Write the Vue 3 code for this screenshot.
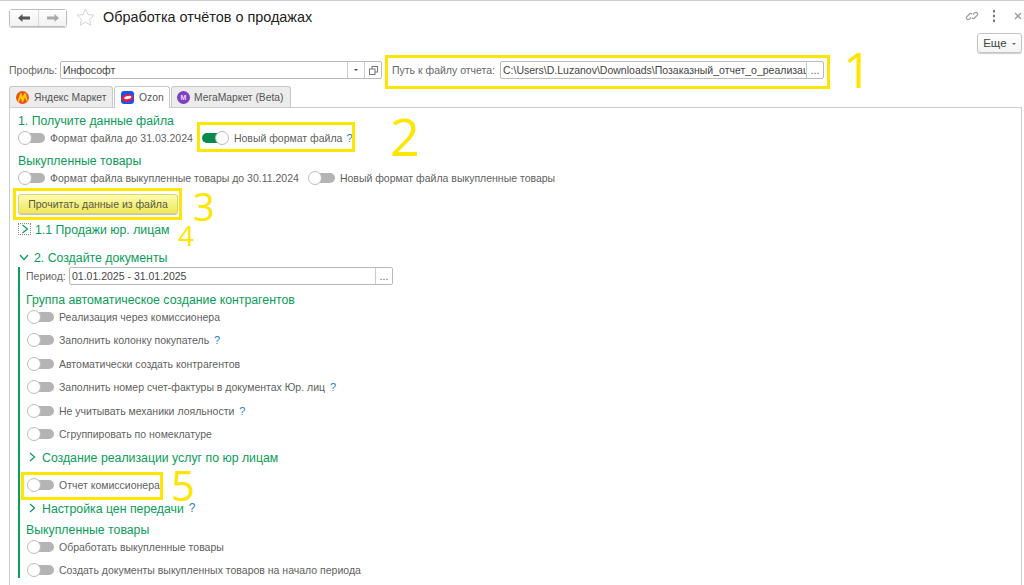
<script setup>
const groupOne = [
  { label: 'Реализация через комиссионера' },
  { label: 'Заполнить колонку покупатель', help: true },
  { label: 'Автоматически создать контрагентов' },
  { label: 'Заполнить номер счет-фактуры в документах Юр. лиц', help: true },
  { label: 'Не учитывать механики лояльности', help: true },
  { label: 'Сгруппировать по номеклатуре' },
]
const marks = [
  { text: '1', cls: 'm1' },
  { text: '2', cls: 'm2' },
  { text: '3', cls: 'm3' },
  { text: '4', cls: 'm4' },
  { text: '5', cls: 'm5' },
]
const boxes = ['b1', 'b2', 'b3', 'b5']
</script>

<template>
  <div class="page">
    <header class="head">
      <div class="nav">
        <button class="nav-btn">
          <svg width="14" height="10" viewBox="0 0 14 10"><path d="M1 5l4.500-4v2.600H13v2.800H5.500V9z" fill="#555" /></svg>
        </button>
        <button class="nav-btn">
          <svg width="14" height="10" viewBox="0 0 14 10"><path d="M13 5L8.500 1v2.600H1v2.800h7.500V9z" fill="#aaa" /></svg>
        </button>
      </div>
      <svg class="star" width="19" height="18" viewBox="0 0 19 18"><path d="M9.500 1l2.500 5.500 6 .7-4.400 4.100 1.200 5.900-5.300-3-5.300 3 1.200-5.900L1 7.200l6-.7z" fill="none" stroke="#d4d4d4" /></svg>
      <h1 class="title">Обработка отчётов о продажах</h1>
      <div class="head-icons">
        <svg width="14" height="14" viewBox="0 0 14 14" fill="none" stroke="#999" stroke-width="1.200"><path d="M6 8.500l-1.800 1.800a1.800 1.800 0 0 1-2.500-2.500L4.500 5a1.800 1.800 0 0 1 2.500 0" /><path d="M8 5.500l1.800-1.800a1.800 1.800 0 0 1 2.500 2.500L9.500 9a1.800 1.800 0 0 1-2.500 0" /></svg>
        <svg class="dots" width="4" height="12" viewBox="0 0 4 12"><path d="M1 0h2v2.500H1zM1 4.700h2v2.500H1zM1 9.400h2v2.500H1z" fill="#777" /></svg>
        <svg class="close" width="8" height="8" viewBox="0 0 8 8"><path d="M1 1l6 6M7 1l-6 6" stroke="#999" stroke-width="1.300" /></svg>
      </div>
    </header>

    <div class="more-row">
      <button class="more">Еще <i class="caret"></i></button>
    </div>

    <div class="fields">
      <label class="lbl profile-lbl">Профиль:</label>
      <div class="input profile">
        <span class="val">Инфософт</span>
        <span class="addon"><i class="caret dark"></i></span>
        <span class="addon">
          <svg width="9" height="9" viewBox="0 0 9 9" fill="#fff" stroke="#777"><rect x="3" y=".5" width="5.500" height="5.500" /><rect x=".5" y="3" width="5.500" height="5.500" /></svg>
        </span>
      </div>
      <label class="lbl path-lbl">Путь к файлу отчета:</label>
      <div class="input path">
        <span class="val clip">C:\Users\D.Luzanov\Downloads\Позаказный_отчет_о_реализац</span>
        <span class="addon">...</span>
      </div>
    </div>

    <nav class="tabs">
      <div class="tab t1">
        <svg class="tab-ico" width="13" height="13" viewBox="0 0 13 13"><circle cx="6.500" cy="6.500" r="6.500" fill="#f0501e" /><path d="M1.500 10.500L4.200 2.500c.6-.7 1.200-.5 1.500.2l.9 3L8.200 2.400c.6-.8 1.400-.6 1.700.2l1.800 7.100c-.4.700-1 .7-1.300.1L8.900 6.500 7.200 10.700c-.5.600-1 .6-1.300 0L4.700 6.800 3 10.800c-.6.500-1.200.3-1.500-.3z" fill="#ffcc00" /></svg>
        Яндекс Маркет
      </div>
      <div class="tab active t2">
        <svg class="tab-ico" width="13" height="13" viewBox="0 0 13 13"><rect width="13" height="13" rx="3" fill="#1457f0" /><ellipse cx="6.500" cy="7" rx="5.800" ry="3.800" transform="rotate(-12 6.500 7)" fill="#f1173f" /><ellipse cx="6.800" cy="6.500" rx="3.600" ry="1.600" transform="rotate(-12 6.800 6.500)" fill="#fff" /></svg>
        Ozon
      </div>
      <div class="tab t3">
        <span class="mega">M</span>
        МегаМаркет (Beta)
      </div>
    </nav>

    <main class="panel">
      <h2 class="sec">1. Получите данные файла</h2>
      <div class="row">
        <span class="tg"></span><span class="txt">Формат файла до 31.03.2024</span>
        <span class="tg on second"></span><span class="txt">Новый формат файла</span><b class="help near">?</b>
      </div>
      <h2 class="sec s2">Выкупленные товары</h2>
      <div class="row r2">
        <span class="tg"></span><span class="txt">Формат файла выкупленные товары до 30.11.2024</span>
        <span class="tg second"></span><span class="txt">Новый формат файла выкупленные товары</span>
      </div>
      <button class="read">Прочитать данные из файла</button>
      <div class="sec-row sub">
        <span class="dotted"><svg width="8" height="10" viewBox="0 0 8 10"><path d="M1.500 1l5 4-5 4" fill="none" stroke="#0a9a58" stroke-width="1.200" /></svg></span>
        <h2 class="sec flat">1.1 Продажи юр. лицам</h2>
      </div>
      <div class="sec-row doc">
        <svg class="chev-down" width="10" height="7" viewBox="0 0 10 7"><path d="M1 1l4 4.500L9 1" fill="none" stroke="#0a9a58" stroke-width="1.200" /></svg>
        <h2 class="sec flat">2. Создайте документы</h2>
      </div>

      <section class="green">
        <div class="period">
          <label class="lbl period-lbl">Период:</label>
          <div class="input period-in">
            <span class="val">01.01.2025 - 31.01.2025</span>
            <span class="addon">...</span>
          </div>
        </div>
        <h2 class="sec s3">Группа автоматическое создание контрагентов</h2>
        <div v-for="item in groupOne" :key="item.label" class="row step">
          <span class="tg inner"></span><span class="txt in">{{ item.label }}</span><b v-if="item.help" class="help">?</b>
        </div>
        <div class="sec-row creation">
          <svg class="chev" width="7" height="10" viewBox="0 0 7 10"><path d="M1 1l4.500 4L1 9" fill="none" stroke="#0a9a58" stroke-width="1.200" /></svg>
          <h2 class="sec flat">Создание реализации услуг по юр лицам</h2>
        </div>
        <div class="row commission">
          <span class="tg inner"></span><span class="txt in">Отчет комиссионера</span>
        </div>
        <div class="sec-row prices">
          <svg class="chev" width="7" height="10" viewBox="0 0 7 10"><path d="M1 1l4.500 4L1 9" fill="none" stroke="#0a9a58" stroke-width="1.200" /></svg>
          <h2 class="sec flat">Настройка цен передачи</h2><b class="help big">?</b>
        </div>
        <h2 class="sec s4">Выкупленные товары</h2>
        <div class="row">
          <span class="tg inner"></span><span class="txt in">Обработать выкупленные товары</span>
        </div>
        <div class="row step">
          <span class="tg inner"></span><span class="txt in">Создать документы выкупленных товаров на начало периода</span>
        </div>
      </section>
    </main>

    <div v-for="b in boxes" :key="b" class="hl" :class="b"></div>
    <span v-for="m in marks" :key="m.text" class="mark" :class="m.cls">{{ m.text }}</span>
  </div>
</template>

<style>
html, body { margin: 0; background: #fff; }
</style>

<style scoped>
.page {
  position: relative;
  width: 1024px;
  height: 585px;
  overflow: hidden;
  background: #fff;
  font-family: "Liberation Sans", Arial, sans-serif;
  font-size: 10.500px;
  color: #5f5f5f;
  border-top: 1px solid #ccc;
  box-sizing: border-box;
}
button { font-family: inherit; padding: 0; cursor: default; }
h1, h2 { margin: 0; font-weight: 400; }

.head { display: flex; align-items: center; height: 32px; padding: 0 2px 0 9px; box-sizing: border-box; }
.nav { display: flex; margin-top: 1px; border: 1px solid #bdbdbd; border-radius: 3px; box-shadow: 0 1px 1px #ccc; }
.nav-btn { display: flex; align-items: center; justify-content: center; width: 28px; height: 16px; border: 0; background: linear-gradient(#fff, #f1f1f1); }
.nav-btn + .nav-btn { border-left: 1px solid #d8d8d8; }
.star { margin-left: 9px; }
.title { margin-left: 8px; font-size: 14.400px; color: #222; line-height: 18px; }
.head-icons { margin-left: auto; margin-bottom: 2px; display: flex; align-items: center; }
.dots { margin-left: 13px; }
.close { margin-left: 18px; }

.more-row { display: flex; justify-content: flex-end; padding-right: 2px; }
.more {
  width: 45px; height: 20px;
  border: 1px solid #c4c4c4; border-radius: 3px;
  background: linear-gradient(#fff, #f3f3f3);
  box-shadow: 0 1px 1px #ccc;
  color: #444; font-size: 11.500px;
}
.caret { display: inline-block; width: 0; height: 0; margin-left: 2px; vertical-align: 2px; border: 2.500px solid transparent; border-top-color: #666; border-bottom: 0; }
.caret.dark { border-top-color: #444; margin: 0; vertical-align: middle; }

.fields { display: flex; align-items: center; height: 18px; margin-top: 8px; padding-left: 9px; }
.lbl { color: #666; white-space: nowrap; }
.input {
  display: flex; height: 18px; box-sizing: border-box;
  border: 1px solid #bbb; border-radius: 2px; background: #fff; color: #444;
}
.val { flex: 1; padding-left: 2px; line-height: 16px; min-width: 0; white-space: nowrap; }
.clip { overflow: hidden; }
.addon { display: flex; align-items: center; justify-content: center; width: 16px; flex: none; border-left: 1px solid #ccc; color: #555; line-height: 14px; }
.profile-lbl { width: 51px; }
.profile { width: 322px; }
.path-lbl { margin-left: 10px; width: 108px; }
.path { width: 324px; }

.tabs { display: flex; height: 21px; margin-top: 7px; padding-left: 9px; gap: 1px; position: relative; z-index: 1; font-size: 10.300px; }
.tab {
  display: flex; align-items: center; gap: 5px; height: 21px; box-sizing: border-box;
  padding-left: 6px; background: #ececec; border: 1px solid #c8c8c8; border-bottom: 0; border-radius: 3px 3px 0 0;
  color: #555; white-space: nowrap;
}
.t1 { width: 104px; }
.t2 { width: 56px; padding-left: 6px; }
.t3 { width: 120px; padding-left: 5px; gap: 4px; }
.active { background: #fff; height: 22px; }
.mega {
  display: flex; align-items: center; justify-content: center;
  width: 13px; height: 13px; border-radius: 50%;
  background: #7e3fc0; color: #f4d9ff; font-size: 7px; font-weight: 700;
}

.panel {
  margin: 0 2px 0 9px; height: 480px; box-sizing: border-box;
  border: 1px solid #ccc; padding: 2px 0 0 8px;
}
.sec { font-size: 12.300px; line-height: 22px; height: 20px; color: #0a9c58; white-space: nowrap; }
.flat { display: inline-block; }
.s2 { margin-top: 4px; }
.row { display: flex; align-items: center; height: 16px; white-space: nowrap; }
.txt { margin-left: 5px; }
.tg {
  position: relative; flex: none; display: block; width: 27px; height: 14px;
}
.tg::before {
  content: ""; position: absolute; left: 4px; right: 0; top: 2px; height: 10px;
  background: #b4b4b4; border-radius: 5px;
}
.tg::after {
  content: ""; position: absolute; left: 0; top: 0; width: 14px; height: 14px; box-sizing: border-box;
  background: #fff; border: 1px solid #bcbcbc; border-radius: 50%;
}
.tg.on::before { left: 0; right: 4px; background: #0a8a4a; }
.tg.on::after { left: 13px; }
.second { margin-left: 9px; }
.help { margin-left: 5px; color: #2a80c4; font-weight: 400; font-size: 11px; }
.help.near { margin-left: 4px; }
.help.big { font-size: 12px; margin-left: 5px; }

.read {
  display: block; width: 160px; height: 20px; margin-top: 8px; box-sizing: border-box;
  border: 1px solid #d8d27a; border-radius: 3px;
  background: linear-gradient(#fdfbae, #efe85a);
  box-shadow: 0 1px 1px #bbb;
  color: #5a5a4a; font-size: 10.500px;
}
.sec-row { display: flex; align-items: center; height: 20px; white-space: nowrap; }
.sub { margin-top: 5px; }
.dotted {
  display: flex; align-items: center; justify-content: center;
  width: 13px; height: 12px; box-sizing: border-box;
  border: 1px dotted #888; margin-right: 4px;
}
.doc { margin-top: 8px; }
.chev-down { margin: 0 5px 0 1px; }
.green { border-left: 2px solid #0aa05a; padding-left: 6px; height: 311px; }
.period { display: flex; align-items: center; height: 18px; }
.period-lbl { width: 43px; }
.period-in { width: 324px; }
.s3 { margin-top: 4px; }
.step { margin-top: 7.400px; }
.inner { margin-left: 1px; }
.s3 + .step { margin-top: 0; }
.creation { margin-top: 5px; }
.chev { margin: 0 6px 0 3px; }
.commission { margin-top: 10px; }
.prices { margin-top: 5px; }
.s4 { margin-top: 1px; }

.hl { position: absolute; box-sizing: border-box; border: 3px solid #ffe600; }
.b1 { left: 385px; top: 54px; width: 445px; height: 34px; }
.b2 { left: 197px; top: 121px; width: 158px; height: 30px; }
.b3 { left: 13px; top: 187px; width: 169px; height: 32px; }
.b5 { left: 21px; top: 471px; width: 142px; height: 28px; }

.mark { position: absolute; color: #ffe600; font-family: "Open Sans", sans-serif; font-weight: 400; line-height: .75; }
.m1 { left: 843px; top: 50px; font-size: 50px; }
.m2 { left: 390px; top: 115px; font-size: 52px; }
.m3 { left: 193px; top: 191px; font-size: 38px; }
.m4 { left: 178px; top: 224px; font-size: 28px; }
.m5 { left: 171px; top: 468px; font-size: 42px; }
</style>
